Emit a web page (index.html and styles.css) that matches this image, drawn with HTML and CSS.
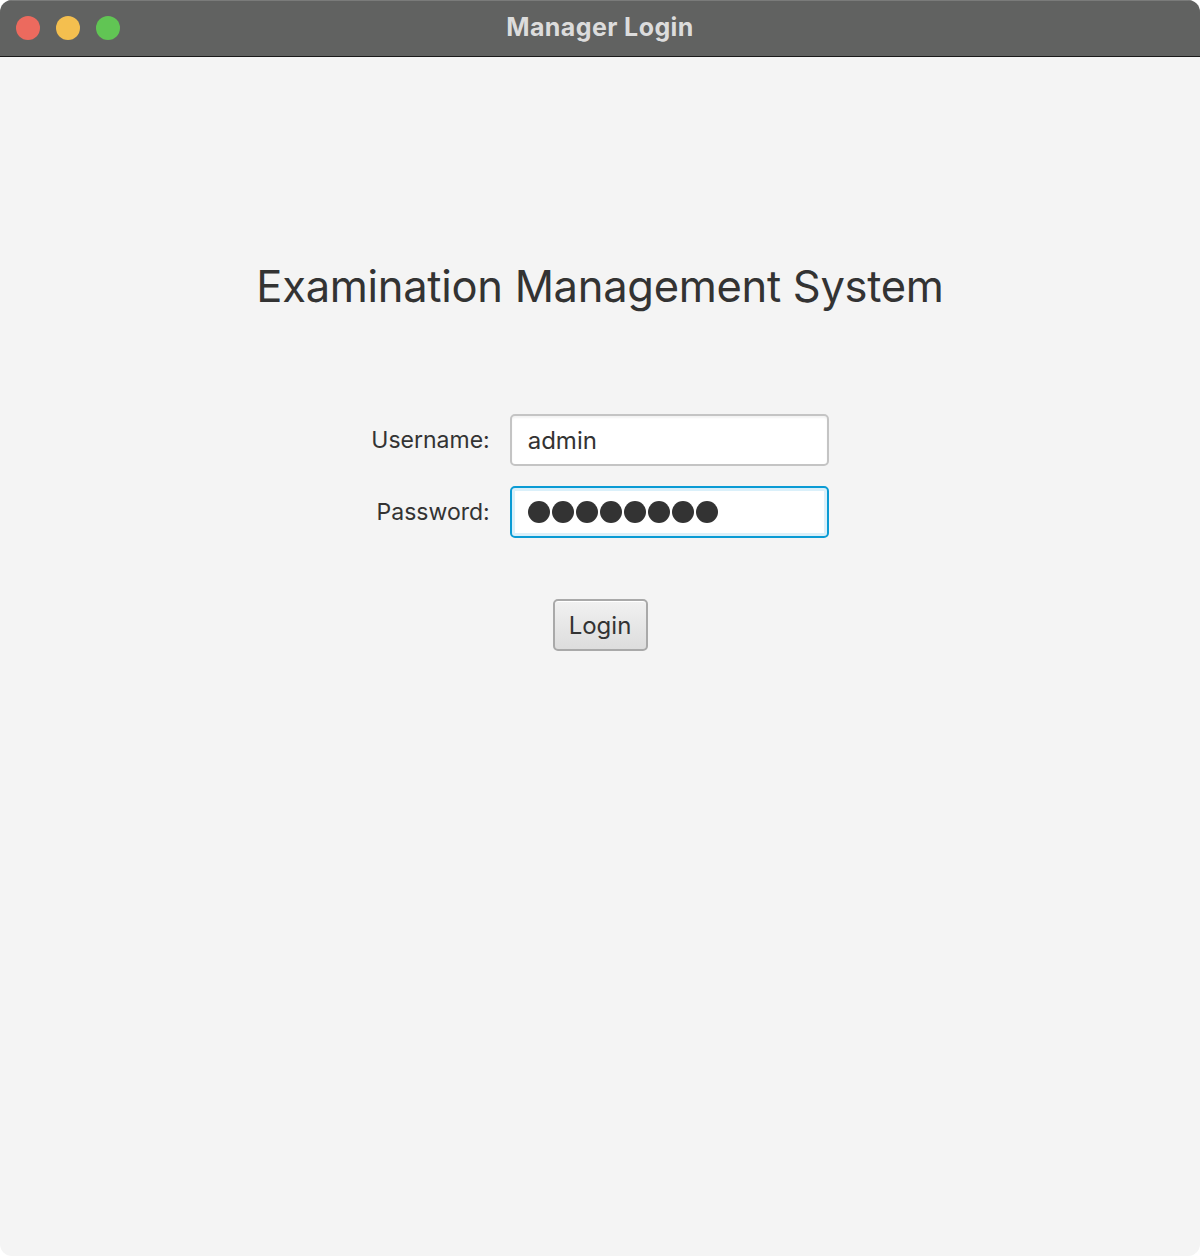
FILE: index.html
```html
<!DOCTYPE html>
<html>
<head>
<meta charset="utf-8">
<link rel="stylesheet" href="styles.css">
</head>
<body>
<div class="window">
  <div class="titlebar">
    <div class="lights">
      <span class="light red"></span>
      <span class="light yellow"></span>
      <span class="light green"></span>
    </div>
    <div class="title">Manager Login</div>
  </div>
  <div class="content">
    <h1 class="heading">Examination Management System</h1>
    <div class="form">
      <label class="label">Username:</label>
      <div class="field"><span class="value">admin</span></div>
      <label class="label">Password:</label>
      <div class="field focused">
        <span class="dots">
          <span class="dot"></span><span class="dot"></span><span class="dot"></span>
          <span class="dot"></span><span class="dot"></span><span class="dot"></span>
          <span class="dot"></span><span class="dot"></span>
        </span>
      </div>
    </div>
    <div class="actions">
      <button class="btn">Login</button>
    </div>
  </div>
</div>
</body>
</html>
```
FILE: styles.css
```css
html, body {
  margin: 0;
  padding: 0;
  background: #ffffff;
}
body {
  font-family: "Inter", "Roboto", "Liberation Sans", sans-serif;
  width: 1200px;
  height: 1256px;
  overflow: hidden;
}
.window {
  width: 1200px;
  height: 1256px;
  border-radius: 12px;
  overflow: hidden;
  background: #f4f4f4;
  display: flex;
  flex-direction: column;
}
.titlebar {
  position: relative;
  height: 56px;
  flex: 0 0 56px;
  background: #616261;
  border-bottom: 1px solid #1a1a1a;
  box-shadow: inset 0 1px 0 #7a7b7a;
  display: flex;
  align-items: center;
  justify-content: center;
}
.lights {
  position: absolute;
  left: 16px;
  top: 16px;
  display: flex;
  gap: 16px;
}
.light {
  width: 24px;
  height: 24px;
  border-radius: 50%;
  display: block;
}
.red { background: #ec6a5e; }
.yellow { background: #f4bf4f; }
.green { background: #61c554; }
.title {
  color: #dcdcdc;
  font-family: "Inter", "Roboto", sans-serif;
  font-weight: 700;
  font-size: 25px;
  letter-spacing: 0.4px;
  margin-top: -2px;
}
.content {
  flex: 1;
  display: flex;
  flex-direction: column;
  align-items: center;
}
.heading {
  margin: 201px 0 0 0;
  font-weight: 400;
  font-size: 43.5px;
  line-height: 56px;
  color: #333333;
  letter-spacing: -0.3px;
}
.form {
  margin-top: 100px;
  display: grid;
  grid-template-columns: auto 319px;
  column-gap: 20px;
  row-gap: 20px;
  align-items: center;
}
.label {
  font-size: 23px;
  color: #333333;
  text-align: right;
}
.field {
  box-sizing: border-box;
  height: 52px;
  border: 2px solid #c4c4c4;
  border-radius: 5px;
  background: #ffffff;
  box-shadow: inset 0 2px 2px rgba(0,0,0,0.05);
  display: flex;
  align-items: center;
  padding-left: 16px;
}
.value {
  font-size: 24px;
  color: #333333;
}
.field.focused {
  border: 2px solid #0a9bd4;
  box-shadow: inset 0 0 0 3px #daf0fa;
}
.dots {
  display: flex;
  gap: 2px;
}
.dot {
  width: 22px;
  height: 22px;
  border-radius: 50%;
  background: #333333;
  display: block;
}
.actions {
  margin-top: 61px;
}
.btn {
  box-sizing: border-box;
  width: 95px;
  height: 52px;
  border: 2px solid #a9a9a9;
  border-radius: 5px;
  background: linear-gradient(#f1f1f1, #dddddd);
  box-shadow: inset 0 1px 0 #ffffff;
  font-family: inherit;
  font-size: 24px;
  color: #333333;
  padding: 0;
}
```
